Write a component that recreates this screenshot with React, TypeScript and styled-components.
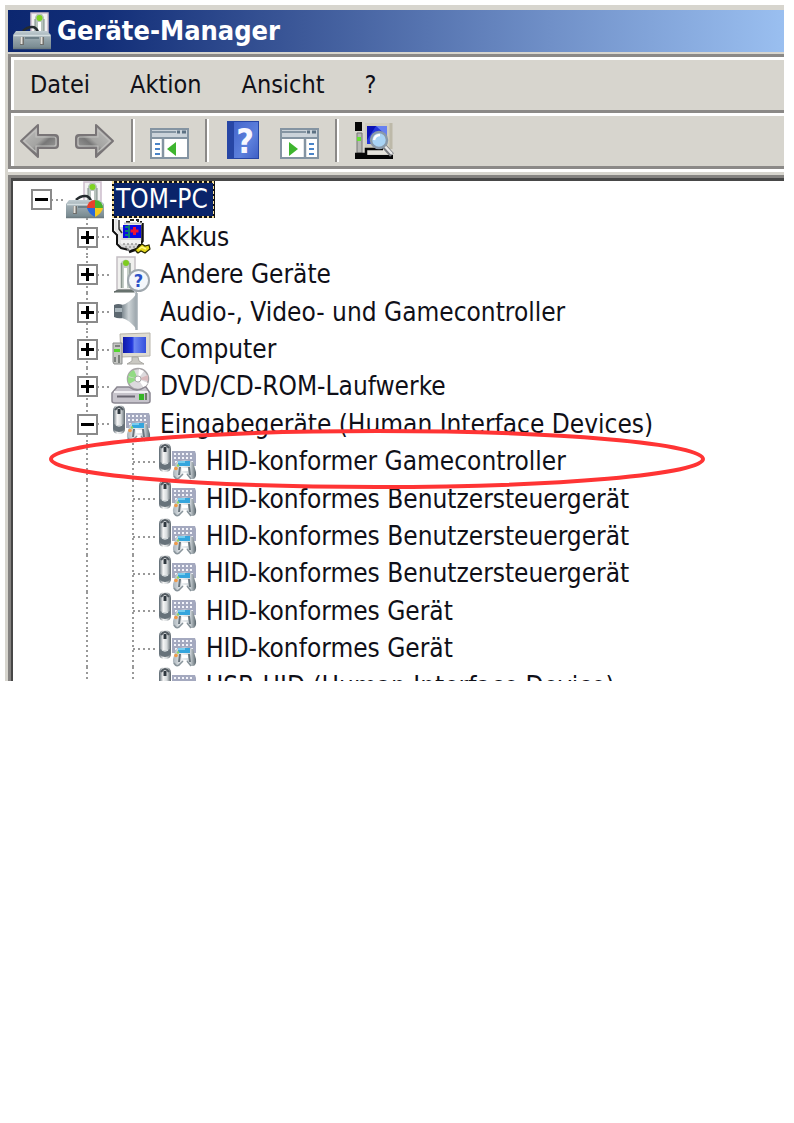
import React from 'react';
import styled, { createGlobalStyle, css } from 'styled-components';

const GlobalStyle = createGlobalStyle`
  *, *::before, *::after { box-sizing: border-box; }
  body {
    margin: 0;
    background: #fff;
    color: #101018;
    font-family: "DejaVu Sans Condensed", "DejaVu Sans", Tahoma, sans-serif;
    font-size: 25px;
  }
`;

const face = '#d7d5ce';
const shade = '#8b8987';

const Page = styled.main`
  padding: 5px 10px 0 5px;
`;

const Window = styled.section`
  display: flex;
  flex-direction: column;
  padding: 5px 0 0 3px;
  background: ${face};
`;

const TitleBar = styled.header`
  display: flex;
  align-items: center;
  gap: 6px;
  height: 42px;
  margin-bottom: 2px;
  padding-left: 5px;
  background: linear-gradient(90deg, #0c2770 0%, #122e78 12%, #3d5999 38%, #7090c8 70%, #9abff0 100%);
`;

const Title = styled.h1`
  margin: 0;
  color: #fff;
  font-size: 27px;
  font-weight: 700;
  line-height: 38px;
`;

const Bar = styled.div`
  display: flex;
  align-items: center;
  height: 56px;
  border: solid ${shade};
  border-width: 3px 0 0 3px;
  box-shadow: inset 3px 3px 0 #fff;
`;

const MenuBar = styled(Bar).attrs({ as: 'nav' })`
  gap: 40px;
  padding: 3px 0 0 19px;
`;

const MenuButton = styled.button`
  padding: 0;
  border: 0;
  background: none;
  color: inherit;
  font: inherit;
  line-height: 38px;
`;

const Toolbar = styled(Bar)`
  gap: 16px;
  padding: 1px 0 0 8px;
`;

const ToolButton = styled.button`
  flex: none;
  width: 40px;
  height: 40px;
  padding: 0;
  border: 0;
  background: none;
`;

const Separator = styled.span`
  flex: none;
  width: 2px;
  height: 43px;
  background: ${shade};
  box-shadow: 2px 0 0 #fff;
`;

const Groove = styled.div`
  height: 6px;
  margin-bottom: 3px;
  border-top: 3px solid ${shade};
  background: #fff;
`;

const TreePane = styled.div`
  max-height: 506px;
  overflow: hidden;
  border: solid #858381;
  border-width: 3px 0 0 3px;
  background: #fff;
  box-shadow: inset 2px 3px 0 #474747;
  padding: 3px 0 0 7px;
`;

const TreeList = styled.ul`
  margin: 0;
  padding: 0;
  list-style: none;
`;

const TreeRow = styled.li`
  position: relative;
  display: flex;
  align-items: center;
  height: 37px;

  &:nth-child(5n + 2),
  &:nth-child(5n + 4) {
    height: 38px;
  }
`;

const dots = (direction: string) =>
  `repeating-linear-gradient(${direction}, #999 0 2px, transparent 2px 5px)`;

const Guide = styled.span<{ $line?: boolean; $branch?: boolean }>`
  position: relative;
  flex: none;
  display: grid;
  place-items: center;
  align-self: stretch;
  width: 46px;

  ${({ $line }) => $line && css`
    &::before {
      content: '';
      position: absolute;
      inset: 0 22px;
      background: ${dots('180deg')};
    }
  `}

  ${({ $branch }) => $branch && css`
    &::after {
      content: '';
      position: absolute;
      left: 23px;
      right: 0;
      top: 18px;
      height: 2px;
      background: ${dots('90deg')};
    }
  `}
`;

const Expander = styled.button<{ $open: boolean }>`
  position: relative;
  z-index: 1;
  width: 21px;
  height: 21px;
  padding: 0;
  border: 2px solid #8a8a8a;
  background:
    linear-gradient(#000, #000) center / 13px 3px no-repeat,
    linear-gradient(#000, #000) center / ${({ $open }) => ($open ? '0 0' : '3px 13px')} no-repeat,
    #fff;
`;

const NodeLabel = styled.span<{ $selected?: boolean }>`
  margin-left: 6px;
  padding: 0 2px;
  border: 2px solid transparent;
  white-space: nowrap;
  line-height: 33px;
  font-size: 26px;

  ${({ $selected }) => $selected && css`
    margin-left: 8px;
    padding: 0 5px 0 2px;
    color: #fff;
    background:
      linear-gradient(#0a246a, #0a246a) padding-box,
      repeating-conic-gradient(#111 0 25%, #f3dc98 0 50%) 0 0 / 5px 5px border-box;
  `}
`;

const NodeIcon = styled.span`
  position: relative;
  flex: none;
  display: block;
  width: 38px;
  height: 38px;
  margin-left: 2px;
`;

const Glyph = styled.svg`
  display: block;
  width: 100%;
  height: 100%;
  overflow: visible;
`;

const Highlight = styled.svg`
  position: absolute;
  z-index: 2;
  left: 31px;
  top: -14px;
  width: 656px;
  height: 60px;
  pointer-events: none;
`;

const TitleIcon = styled.span`
  width: 38px;
  height: 38px;
`;

function ToolboxIcon({ shield }: { shield?: boolean }) {
  return (
    <Glyph viewBox="0 0 38 38" aria-hidden="true">
      <defs>
        <linearGradient id="steel" x1="0" y1="0" x2="0" y2="1">
          <stop offset="0" stopColor="#c2ced3" />
          <stop offset=".35" stopColor="#9dabb1" />
          <stop offset="1" stopColor="#778990" />
        </linearGradient>
      </defs>
      <path d="M18 1h17v19H18z" fill="#f2f2f2" stroke="#cbbccb" strokeWidth="1.500" />
      <path d="M22 5l2-3h5l2 3v14h-9z" fill="#b8c3bd" />
      <path d="M25 10h3v9h-3z" fill="#fff" />
      <path d="M22 7v12M31 7v12" stroke="#7d8b86" />
      <circle cx="26.500" cy="6" r="3" fill="#7ed321" />
      <path d="M10 19c3-3 6-4 9-4s5 2 6 5" fill="none" stroke="#252b2e" strokeWidth="2.500" />
      <path d="M3 19h31l4 4v13H0V23z" fill="url(#steel)" />
      <path d="M1 23.500h36" stroke="#d3dde0" strokeWidth="1.500" />
      <path d="M0 36.500h38" stroke="#6d7b81" strokeWidth="1.500" />
      <path d="M12 26h14" stroke="#6e8088" strokeWidth="2" />
      <path d="M9 25v8M29 25v8" stroke="#6f6f6c" strokeWidth="4" />
      <path d="M8.500 25v7M28.500 25v7" stroke="#e4e2dc" strokeWidth="2" />
      {shield && (
        <g>
          <path d="M29 27V19a8 8 0 0 0-8 8z" fill="#e8402b" />
          <path d="M29 27h8a8 8 0 0 0-8-8z" fill="#49b22c" />
          <path d="M29 27h-8c1 4 4 7 8 9z" fill="#2a68d8" />
          <path d="M29 27h8c-1 4-4 7-8 9z" fill="#f6c91d" />
        </g>
      )}
    </Glyph>
  );
}

function BatteryIcon() {
  return (
    <Glyph viewBox="0 0 38 38" aria-hidden="true">
      <path d="M7 9h23v16l-6 9-8-1-8-4-3-8z" fill="#d8d8d8" />
      <path d="M1 1v12l4 4v9l4 4 8 2" fill="none" stroke="#111" strokeWidth="2" />
      <path d="M4 1v10l4 5v9" fill="none" stroke="#e4e4e4" strokeWidth="3" />
      <path d="M7 2v9l3 4" fill="none" stroke="#333" strokeWidth="1.500" />
      <path d="M14 4h4V2h8v2h4" fill="none" stroke="#222" strokeWidth="2" strokeDasharray="4 2" />
      <path d="M30.500 5v18l-5 7" fill="none" stroke="#111" strokeWidth="2.500" />
      <path d="M12 5.500h18" stroke="#c8c8c8" strokeWidth="2" />
      <path d="M11 7h18v13H11z" fill="#0909e4" />
      <path d="M13 9h4M13 13h4M13 17h4M17 7v13" stroke="#087a78" strokeWidth="2" />
      <path d="M22.500 9v8M18.500 13h8" stroke="#f01030" strokeWidth="3" />
      <path d="M9 22h20v4H9z" fill="#f2f2f2" />
      <path d="M11 26h14M13 29h10M15 32h6" stroke="#999" strokeWidth="1.500" strokeDasharray="2 2" />
      <path d="M17 34l8-3 1 4" fill="none" stroke="#111" strokeWidth="2.500" />
      <path d="M23 32l7-6 3 2 4-1 1 4-5 4-4-2-3 2z" fill="#e5d91c" stroke="#292900" strokeWidth="1.200" />
      <path d="M27 31l3-2 4 2" fill="none" stroke="#fff887" strokeWidth="1.500" />
    </Glyph>
  );
}

function UnknownIcon() {
  return (
    <Glyph viewBox="0 0 38 38" aria-hidden="true">
      <path d="M5 1h18v33H5z" fill="#f0f0ee" stroke="#c4bec4" strokeWidth="1.500" />
      <path d="M9 6q5-5 9 0v26H9z" fill="#c4cdc6" />
      <path d="M9.500 7v25M18 7v25" stroke="#8b9790" strokeWidth="1.500" />
      <path d="M12 12h3v20h-3z" fill="#fff" />
      <circle cx="14" cy="7" r="3" fill="#7dcc20" />
      <path d="M2 36l4-2h17l2 2z" fill="#74807c" stroke="#5b6461" />
      <path d="M21 33l2 5 3-5z" fill="#cfd6da" />
      <circle cx="26.500" cy="24.500" r="10.500" fill="#f4f7fb" stroke="#a0a8ae" strokeWidth="2" />
      <text x="26.500" y="31" textAnchor="middle" fontSize="18" fontWeight="700" fill="#2950c8">?</text>
    </Glyph>
  );
}

function SpeakerIcon() {
  return (
    <Glyph viewBox="0 0 38 38" aria-hidden="true">
      <defs>
        <linearGradient id="cone">
          <stop offset="0" stopColor="#7d8990" />
          <stop offset=".45" stopColor="#ccd3d6" />
          <stop offset="1" stopColor="#98a2a8" />
        </linearGradient>
      </defs>
      <path d="M2 12q4-2 9 0v13q-5 1-9-1z" fill="#5c6870" />
      <path d="M3 15h7v4H3z" fill="#a9b5bb" />
      <path d="M10 12Q18 10 25 0v37Q18 27 10 25z" fill="url(#cone)" />
      <path d="M24.500 0v37" stroke="#a3adb3" strokeWidth="2.500" />
    </Glyph>
  );
}

function ComputerIcon() {
  return (
    <Glyph viewBox="0 0 38 38" aria-hidden="true">
      <defs>
        <linearGradient id="screen">
          <stop offset="0" stopColor="#1019a8" />
          <stop offset=".4" stopColor="#2238dd" />
          <stop offset=".5" stopColor="#6c86f2" />
          <stop offset="1" stopColor="#3450dc" />
        </linearGradient>
      </defs>
      <path d="M8 3l30-1v23l-29 1z" fill="#dedbd0" stroke="#b7b4aa" />
      <path d="M11 6h23v16H11z" fill="url(#screen)" />
      <path d="M20 26h6l1 4 5 3H15l5-3z" fill="#c9c8c2" stroke="#aaa9a4" />
      <path d="M1 12h9v21H2l-1-2z" fill="#c5c6c3" stroke="#898c8b" />
      <path d="M3 15h5M3 26v5M7 24v8" stroke="#666b68" strokeWidth="1.500" />
      <path d="M2 18h6v3H2z" fill="#54d52f" />
    </Glyph>
  );
}

function DiscIcon() {
  return (
    <Glyph viewBox="0 0 38 38" aria-hidden="true">
      <circle cx="26" cy="11" r="10.500" fill="#dcdadd" stroke="#a6a3a6" strokeWidth="1.500" />
      <path d="M26 11L16 8q2-5 6-6zM26 11l-9 5q-2-3-1-7z" fill="#92db84" />
      <path d="M26 11l1-10 5 2zM26 11l10 4-4 5z" fill="#fff" />
      <path d="M26 11l10-4v6z" fill="#d9b9bc" />
      <circle cx="26" cy="11" r="3" fill="#fff" stroke="#aaa" />
      <path d="M5 19h12q8 6 16 0h1l4 6v8q0 2-3 2H3q-3 0-3-2v-8z" fill="#c7c4cc" stroke="#8b8791" strokeWidth="1.500" />
      <path d="M2 24h34" stroke="#f1eff3" strokeWidth="2" />
      <path d="M5 28.500h18" stroke="#686570" strokeWidth="2" />
      <path d="M27 26h5v6h-5z" fill="#35b525" />
      <path d="M34 25v7" stroke="#6d7c69" strokeWidth="2" />
    </Glyph>
  );
}

function InputIcon() {
  return (
    <Glyph viewBox="0 0 38 38" aria-hidden="true">
      <defs>
        <linearGradient id="mouse">
          <stop offset="0" stopColor="#56636c" />
          <stop offset=".35" stopColor="#f6f6f6" />
          <stop offset=".65" stopColor="#d6dadc" />
          <stop offset="1" stopColor="#5c666d" />
        </linearGradient>
        <linearGradient id="pad">
          <stop offset="0" stopColor="#a9b3ba" />
          <stop offset=".4" stopColor="#eef1f3" />
          <stop offset=".75" stopColor="#ccd3d7" />
          <stop offset="1" stopColor="#59666d" />
        </linearGradient>
      </defs>
      <path d="M14 8h23l1 3v12H14z" fill="#a4a9bf" />
      <path d="M16 11h20M16 15h20M17 19h20" stroke="#f4f5fb" strokeWidth="2" strokeDasharray="2 2" />
      <path d="M1 6q0-6 6-6t6 6v18q0 5-6 5t-6-5z" fill="url(#mouse)" />
      <path d="M3 5q4-6 8 0" fill="none" stroke="#515960" strokeWidth="2" />
      <path d="M5.500 4h3v5h-3z" fill="#303940" />
      <path d="M2 19q5 3 10 0v6q-5 4-10 0z" fill="#67727a" />
      <path d="M4 20q3 2 6 0" fill="none" stroke="#dbe0e2" strokeWidth="1.500" />
      <path d="M18 19q9-3 17 0l3 10q1 8-5 7l-5-6h-2l-5 6q-7 1-6-7z" fill="url(#pad)" />
      <path d="M20 18h12v5H20z" fill="#35a5dd" />
      <path d="M20 19h7" stroke="#8fdcf4" strokeWidth="1.500" />
      <path d="M22 24l-1 8M31 24l1 8" stroke="#69757d" strokeWidth="2" />
      <path d="M24 25h6v3h-6z" fill="#fff" />
      <path d="M16 33q3 5 6 1l3-3M29 31l4 5" fill="none" stroke="#89949b" strokeWidth="1.500" />
      <circle cx="18" cy="25.500" r="1.800" fill="#f39a48" />
      <circle cx="20" cy="22.500" r="1.200" fill="#8fd45e" />
    </Glyph>
  );
}

function ArrowIcon({ forward }: { forward?: boolean }) {
  return (
    <Glyph viewBox="0 0 40 40" aria-hidden="true">
      <defs>
        <linearGradient id="arrow" x1="0" y1="0" x2="1" y2="1">
          <stop offset="0" stopColor="#c4c4c2" />
          <stop offset=".5" stopColor="#a4a4a2" />
          <stop offset=".6" stopColor="#777" />
          <stop offset="1" stopColor="#b2b2b0" />
        </linearGradient>
      </defs>
      <g transform={forward ? 'matrix(-1 0 0 1 40 0)' : undefined}>
        <path d="M2 21L19 5v10h17q3 0 3 3v7q0 3-3 3H19v9z" fill="url(#arrow)" stroke="#797577" strokeWidth="2" strokeLinejoin="round" />
        <path d="M5 21L17 10v7h18q2 0 2 2v5q0 2-2 2H17v6z" fill="none" stroke="#c0bfbd" strokeWidth="1.200" />
      </g>
    </Glyph>
  );
}

function PaneIcon({ action }: { action?: boolean }) {
  return (
    <Glyph viewBox="0 0 40 40" aria-hidden="true">
      <path d="M2 9h37v29H2z" fill="#fff" stroke="#8494a2" strokeWidth="2" />
      <path d="M3 10h35v8H3z" fill="#cbd3da" />
      <path d="M3 12h24M3 18h35" stroke="#8494a2" strokeWidth="2" />
      <path d="M28 12h3M33 12h4" stroke="#5c7182" strokeWidth="3" />
      {action ? (
        <g>
          <path d="M26 18v20" stroke="#8494a2" strokeWidth="2.500" />
          <path d="M10 22v14l9-7z" fill="#3eb52e" />
          <path d="M30 24h5M30 29h5M30 34h5" stroke="#4a84c8" strokeWidth="2" />
        </g>
      ) : (
        <g>
          <path d="M14 18v20" stroke="#8494a2" strokeWidth="2.500" />
          <path d="M27 22v14l-9-7z" fill="#3eb52e" />
          <path d="M6 24h5M6 29h5M6 34h5" stroke="#4a84c8" strokeWidth="2" />
        </g>
      )}
    </Glyph>
  );
}

function HelpIcon() {
  return (
    <Glyph viewBox="0 0 40 40" aria-hidden="true">
      <defs>
        <linearGradient id="book" x1="0" y1="0" x2="1" y2="1">
          <stop offset="0" stopColor="#4466cc" />
          <stop offset=".6" stopColor="#5d80dc" />
          <stop offset="1" stopColor="#3f60c6" />
        </linearGradient>
      </defs>
      <path d="M4 1h32v38H4z" fill="#2746a5" />
      <path d="M11 2h24v36H11z" fill="url(#book)" />
      <text x="22" y="33" textAnchor="middle" fontSize="34" fontFamily="DejaVu Sans Condensed" fontWeight="700" fill="#f8f8ff">?</text>
    </Glyph>
  );
}

function ScanIcon() {
  return (
    <Glyph viewBox="0 0 40 40" aria-hidden="true">
      <path d="M2 2h7v9H2z" fill="#050505" />
      <path d="M12 3h26v26H12z" fill="#d0cdbf" />
      <path d="M38 3v26" stroke="#bdb9a9" strokeWidth="3" />
      <path d="M14 6h20v18H14z" fill="#2438dc" />
      <path d="M14 6h9l-9 14z" fill="#0b12b4" />
      <path d="M23 6h11v10z" fill="#6680f0" />
      <path d="M4 13h5v20H4z" fill="#b7b8b4" stroke="#777" />
      <path d="M4 17h4v4H4z" fill="#64e234" />
      <path d="M14 28h17l6 6H13z" fill="#e5e3dc" />
      <path d="M2 34h11v-5h17" fill="none" stroke="#070707" strokeWidth="2.500" />
      <path d="M2 35h38v4H2z" fill="#050505" />
      <path d="M30 25l9 10" stroke="#77797d" strokeWidth="5" />
      <path d="M30 24l9 10" stroke="#e8e8e8" strokeWidth="2.500" />
      <circle cx="26" cy="20" r="8" fill="#a9d4f5" stroke="#8a9aaa" strokeWidth="2.500" />
      <path d="M21 20q1-5 6-5" fill="none" stroke="#fff" strokeWidth="2.500" />
    </Glyph>
  );
}

interface TreeNode {
  label: string;
  level: number;
  icon: React.ReactNode;
  open?: boolean;
  selected?: boolean;
  marked?: boolean;
}

const device = (label: string, marked = false): TreeNode => ({
  label,
  level: 2,
  icon: <InputIcon />,
  marked,
});

const nodes: TreeNode[] = [
  { label: 'TOM-PC', level: 0, icon: <ToolboxIcon shield />, open: true, selected: true },
  { label: 'Akkus', level: 1, icon: <BatteryIcon />, open: false },
  { label: 'Andere Geräte', level: 1, icon: <UnknownIcon />, open: false },
  { label: 'Audio-, Video- und Gamecontroller', level: 1, icon: <SpeakerIcon />, open: false },
  { label: 'Computer', level: 1, icon: <ComputerIcon />, open: false },
  { label: 'DVD/CD-ROM-Laufwerke', level: 1, icon: <DiscIcon />, open: false },
  { label: 'Eingabegeräte (Human Interface Devices)', level: 1, icon: <InputIcon />, open: true },
  device('HID-konformer Gamecontroller', true),
  device('HID-konformes Benutzersteuergerät'),
  device('HID-konformes Benutzersteuergerät'),
  device('HID-konformes Benutzersteuergerät'),
  device('HID-konformes Gerät'),
  device('HID-konformes Gerät'),
  device('USB-HID (Human Interface Device)'),
];

function TreeItem({ node }: { node: TreeNode }) {
  const { label, level, icon, open, selected, marked } = node;
  return (
    <TreeRow role="treeitem" aria-level={level + 1} aria-expanded={open} aria-selected={!!selected}>
      {Array.from({ length: level }, (_, depth) => (
        <Guide key={depth} $line={depth > 0} />
      ))}
      <Guide $line={level > 0} $branch>
        {open !== undefined && (
          <Expander $open={open} aria-label={`${label} ${open ? 'reduzieren' : 'erweitern'}`} />
        )}
      </Guide>
      <NodeIcon>{icon}</NodeIcon>
      <NodeLabel $selected={selected}>{label}</NodeLabel>
      {marked && (
        <Highlight viewBox="0 0 656 60" aria-hidden="true">
          <ellipse cx="328" cy="30" rx="326" ry="28" fill="none" stroke="#ff3434" strokeWidth="4" />
        </Highlight>
      )}
    </TreeRow>
  );
}

export default function App() {
  return (
    <Page>
      <GlobalStyle />
      <Window>
        <TitleBar>
          <TitleIcon><ToolboxIcon /></TitleIcon>
          <Title>Geräte-Manager</Title>
        </TitleBar>
        <MenuBar>
          <MenuButton>Datei</MenuButton>
          <MenuButton>Aktion</MenuButton>
          <MenuButton>Ansicht</MenuButton>
          <MenuButton>?</MenuButton>
        </MenuBar>
        <Toolbar role="toolbar">
          <ToolButton aria-label="Zurück"><ArrowIcon /></ToolButton>
          <ToolButton aria-label="Vorwärts"><ArrowIcon forward /></ToolButton>
          <Separator />
          <ToolButton aria-label="Konsolenstruktur"><PaneIcon /></ToolButton>
          <Separator />
          <ToolButton aria-label="Hilfe"><HelpIcon /></ToolButton>
          <ToolButton aria-label="Aktionsbereich"><PaneIcon action /></ToolButton>
          <Separator />
          <ToolButton aria-label="Nach geänderter Hardware suchen"><ScanIcon /></ToolButton>
        </Toolbar>
        <Groove />
        <TreePane>
          <TreeList role="tree" aria-label="Geräte">
            {nodes.map((node, index) => (
              <TreeItem key={index} node={node} />
            ))}
          </TreeList>
        </TreePane>
      </Window>
    </Page>
  );
}
